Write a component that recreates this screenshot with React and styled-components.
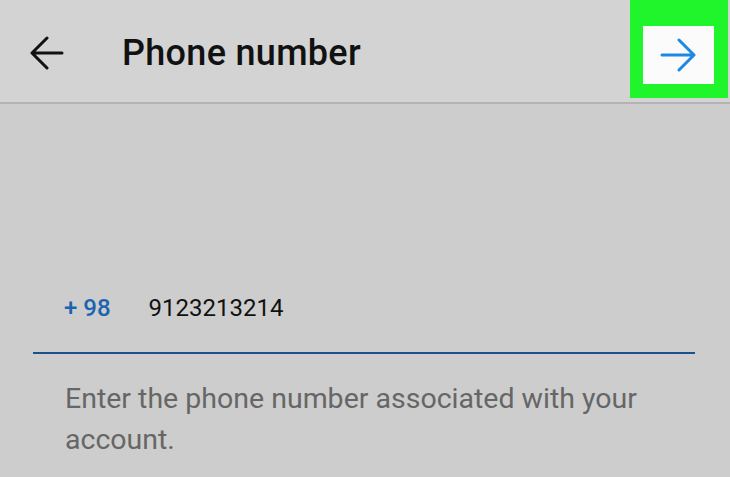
import styled, { createGlobalStyle } from "styled-components";

const GlobalStyle = createGlobalStyle`
  html, body {
    margin: 0;
    padding: 0;
    background: #cdcdcd;
    font-family: Roboto, "Liberation Sans", sans-serif;
  }
`;

function BackArrow() {
  return (
    <svg width="34" height="36" viewBox="0 0 34 36" fill="none">
      <path d="M32 18H3M17 3L2 18l15 15" stroke="#111" strokeWidth="3" strokeLinecap="round" strokeLinejoin="round" />
    </svg>
  );
}

function NextArrow() {
  return (
    <svg width="36" height="36" viewBox="0 0 36 36" fill="none">
      <path d="M2 18h31M19 3l15 15-15 15" stroke="#1e88e5" strokeWidth="3" strokeLinecap="round" strokeLinejoin="round" />
    </svg>
  );
}

export default function App() {
  return (
    <Screen>
      <GlobalStyle />
      <Header>
        <IconButton>
          <BackArrow />
        </IconButton>
        <Title>Phone number</Title>
        <Highlight>
          <NextButton>
            <NextArrow />
          </NextButton>
        </Highlight>
      </Header>
      <Body>
        <Field>
          <Code>+ 98</Code>
          <Number>9123213214</Number>
        </Field>
        <Helper>Enter the phone number associated with your account.</Helper>
      </Body>
    </Screen>
  );
}

const Screen = styled.div`
  width: 730px;
  height: 477px;
  overflow: hidden;
  background: #cdcdcd;
`;

const Header = styled.div`
  height: 104px;
  display: flex;
  align-items: center;
  padding-left: 30px;
  padding-right: 2px;
  background: #d3d3d3;
  border-bottom: 2px solid #b4b4b4;
  box-sizing: border-box;
`;

const IconButton = styled.div`
  width: 34px;
  height: 36px;
  display: flex;
  margin-top: 4px;
`;

const Title = styled.h1`
  flex: 1;
  margin: 4px 0 0 58px;
  font-size: 36px;
  font-weight: 500;
  color: #111;
  letter-spacing: 0.3px;
`;

const Highlight = styled.div`
  align-self: flex-start;
  width: 98px;
  height: 98px;
  background: #1ff52a;
  display: flex;
  align-items: center;
  justify-content: center;
  padding-right: 2px;
  box-sizing: border-box;
`;

const NextButton = styled.div`
  width: 71px;
  height: 58px;
  background: #fbfbfb;
  display: flex;
  align-items: center;
  justify-content: center;
  margin-top: 12px;
`;

const Body = styled.div`
  padding: 190px 35px 0 33px;
`;

const Field = styled.div`
  display: flex;
  align-items: baseline;
  gap: 38px;
  padding: 0 0 30px 31px;
  border-bottom: 2px solid #1d4f8c;
  font-size: 24px;
`;

const Code = styled.span`
  color: #1b64b0;
  font-weight: 500;
`;

const Number = styled.span`
  color: #111;
`;

const Helper = styled.p`
  margin: 24px 0 0 32px;
  font-size: 28.5px;
  line-height: 41px;
  color: #666;
  max-width: 600px;
`;
